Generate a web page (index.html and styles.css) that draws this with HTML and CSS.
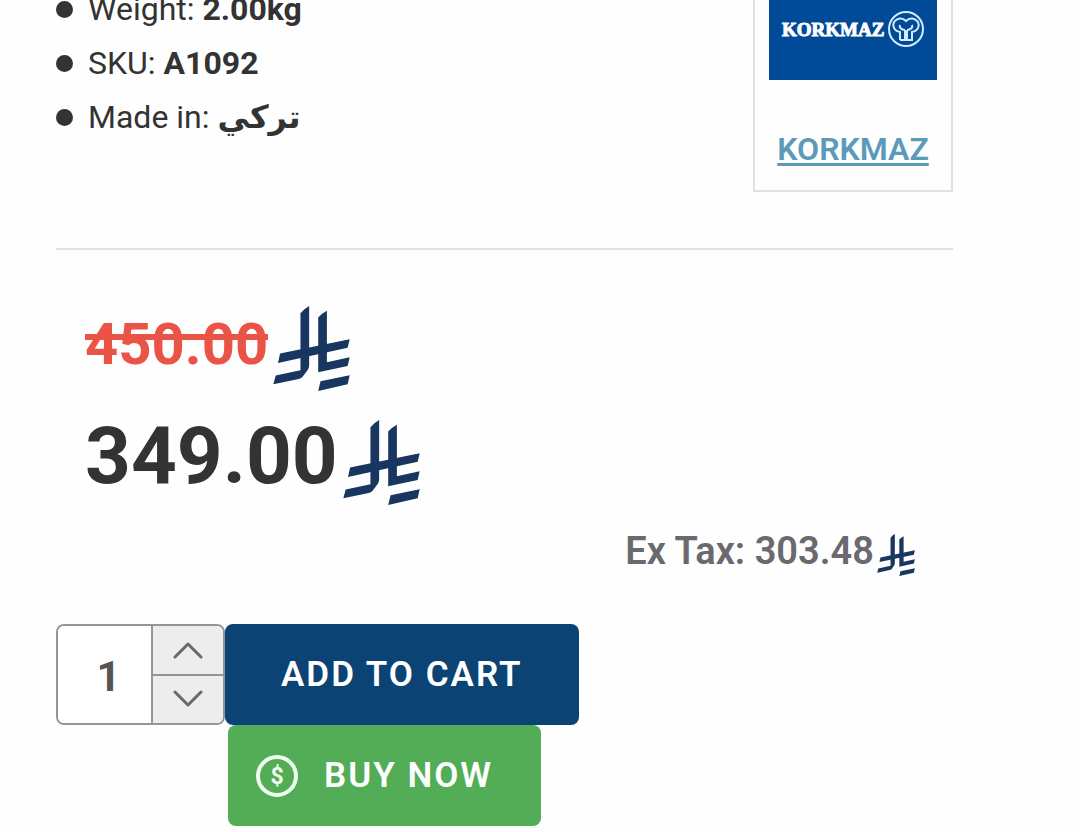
FILE: index.html
```html
<!DOCTYPE html>
<html lang="en">
<head>
	<meta charset="UTF-8">
	<title>KORKMAZ A1092</title>
	<link rel="stylesheet" href="styles.css">
</head>
<body>

<svg class="defs" aria-hidden="true">
	<symbol id="riyal" viewBox="0 0 228 254">
		<path d="M107 0Q92 8 81 22V192L7 208L0 234L76 218Q84 216 88 211L102 192Q107 185 107 176Z"/>
		<path d="M160 14Q145 22 134 34V198L222 179L228 153L160 168Z"/>
		<path d="M20 142L228 99L222 125L14 170Z"/>
		<path d="M141 225L228 207L222 234L134 254Z"/>
	</symbol>
</svg>

<main class="product">
	<div class="details">
		<ul class="stats">
			<li>Weight: <b>2.00kg</b></li>
			<li>SKU: <b>A1092</b></li>
			<li>Made in: <b class="arabic" lang="ar">تركي</b></li>
		</ul>
		<div class="brand">
			<svg class="brand-logo" viewBox="0 0 168 98" role="img" aria-label="KORKMAZ">
				<rect width="168" height="98" fill="#014a98"/>
				<text class="brand-text" x="13" y="54">KORKMAZ</text>
				<g fill="none" stroke="#d3ebff" stroke-width="2">
					<circle cx="137" cy="47" r="17"/>
					<path d="M131 58V50C125 49 123 44 125 40C128 36 133 35 137 39C141 35 146 36 149 40C151 44 149 49 143 50V58H138V48M131 58H136V48M136 48C132 48 130 45 131 43M138 48C142 48 144 45 143 43"/>
				</g>
			</svg>
			<a href="#">KORKMAZ</a>
		</div>
	</div>

	<div class="prices">
		<div class="price old"><del>450.00</del><svg><use href="#riyal"/></svg></div>
		<div class="price new"><span>349.00</span><svg><use href="#riyal"/></svg></div>
		<div class="price tax"><span>Ex Tax: 303.48</span><svg><use href="#riyal"/></svg></div>
	</div>

	<form class="cart">
		<div class="stepper">
			<input type="text" id="qty" value="1" aria-label="Quantity">
			<div class="arrows">
				<button type="button" aria-label="Increase">
					<svg viewBox="0 0 30 18"><path d="M2 16L15 3L28 16"/></svg>
				</button>
				<button type="button" aria-label="Decrease">
					<svg viewBox="0 0 30 18"><path d="M2 2L15 15L28 2"/></svg>
				</button>
			</div>
		</div>
		<div class="buttons">
			<button type="button" class="btn add">ADD TO CART</button>
			<button type="button" class="btn buy">
				<svg viewBox="0 0 42 42" aria-hidden="true">
					<circle cx="21" cy="21" r="19"/>
					<text x="21" y="29">$</text>
				</svg>
				BUY NOW
			</button>
		</div>
	</form>
</main>

<script>
	var qty = document.getElementById("qty");
	var arrows = document.querySelectorAll(".arrows button");

	arrows[0].onclick = function(){
		qty.value = Number(qty.value) + 1;
	}
	arrows[1].onclick = function(){
		if(qty.value > 1){
			qty.value = Number(qty.value) - 1;
		}
	}
</script>

</body>
</html>
```
FILE: styles.css
```css
*{
	margin: 0;
	padding: 0;
	box-sizing: border-box;
}
body{
	font-family: Roboto, "DejaVu Sans", sans-serif;
	color: #333;
	background: #fefefe;
}
button, input{
	font-family: inherit;
}
.defs{
	display: none;
}

.product{
	margin-top: -18px;
	padding: 0 127px 0 56px;
}

/* details */
.details{
	display: flex;
	justify-content: space-between;
	align-items: flex-start;
	padding-bottom: 56px;
	border-bottom: 2px solid #e1e1e1;
}
.stats{
	list-style: none;
	font-size: 32px;
	font-weight: 400;
	line-height: 54px;
}
.stats li{
	display: flex;
	align-items: center;
	gap: 8px;
}
.stats li:before{
	content: "";
	width: 17px;
	height: 17px;
	margin-right: 7px;
	border-radius: 50%;
	background: #333;
}
.stats b{
	font-weight: 700;
}
.stats .arabic{
	font-family: "DejaVu Sans", sans-serif;
}

.brand{
	display: flex;
	flex-direction: column;
	align-items: center;
	padding: 0 14px 20px;
	border: 2px solid #e1e1e1;
	border-top: 0;
}
.brand-logo{
	width: 168px;
	height: 98px;
	margin-bottom: 48px;
}
.brand-text{
	font-family: "Liberation Serif", serif;
	font-size: 19px;
	font-weight: 700;
	fill: #fff;
	stroke: #fff;
	stroke-width: 1px;
}
.brand a{
	color: #5c9aba;
	font-size: 32px;
	font-weight: 600;
	line-height: 42px;
	text-underline-offset: 3px;
	text-decoration-thickness: 3px;
}

/* prices */
.prices{
	display: flex;
	flex-direction: column;
	gap: 29px;
	padding: 56px 38px 48px 29px;
}
.price{
	display: flex;
	align-items: flex-start;
	gap: 5px;
	font-weight: 700;
}
.price svg{
	width: 77px;
	height: 85px;
	fill: #18365f;
}
.old{
	color: #ea5446;
	font-size: 58px;
	line-height: 76px;
}
.old del{
	position: relative;
	text-decoration: none;
}
.old del:after{
	content: "";
	position: absolute;
	top: 28px;
	left: 0;
	right: 0;
	height: 6px;
	background: #ea5446;
}
.new{
	font-size: 80px;
	line-height: 72px;
}
.tax{
	align-self: flex-end;
	gap: 3px;
	color: #69696f;
	font-size: 38px;
	font-weight: 600;
	line-height: 34px;
}
.tax svg{
	width: 38px;
	height: 42px;
}

/* cart */
.cart{
	display: flex;
	align-items: flex-start;
}
.stepper{
	display: flex;
	width: 169px;
	height: 101px;
	border: 2px solid #8f979d;
	border-radius: 8px;
	overflow: hidden;
}
.stepper input{
	flex: 1;
	min-width: 0;
	padding: 4px 0 0 8px;
	border: 0;
	outline: none;
	background: #fff;
	color: #555;
	font-size: 42px;
	font-weight: 700;
	text-align: center;
}
.arrows{
	display: flex;
	flex-direction: column;
	width: 72px;
	border-left: 2px solid #8f979d;
}
.arrows button{
	flex: 1;
	display: flex;
	align-items: center;
	justify-content: center;
	border: 0;
	background: #ededed;
	cursor: pointer;
}
.arrows button:first-child{
	border-bottom: 2px solid #8f979d;
}
.arrows svg{
	width: 30px;
	height: 18px;
	fill: none;
	stroke: #69696f;
	stroke-width: 3;
	stroke-linecap: round;
	stroke-linejoin: round;
}
.buttons{
	display: flex;
	flex-direction: column;
	align-items: flex-start;
}
.btn{
	display: flex;
	align-items: center;
	height: 101px;
	border: 0;
	border-radius: 8px;
	color: #fff;
	font-size: 35px;
	font-weight: 600;
	letter-spacing: 2px;
	white-space: nowrap;
	cursor: pointer;
}
.add{
	padding: 0 56px;
	background: #0b4374;
}
.buy{
	gap: 26px;
	margin-left: 3px;
	padding: 0 48px 0 28px;
	background: #52ad56;
}
.buy svg{
	width: 42px;
	height: 42px;
}
.buy circle{
	fill: none;
	stroke: #f0fff0;
	stroke-width: 4;
}
.buy text{
	fill: #f0fff0;
	font-size: 23px;
	font-weight: 700;
	letter-spacing: 0;
	text-anchor: middle;
}
```
